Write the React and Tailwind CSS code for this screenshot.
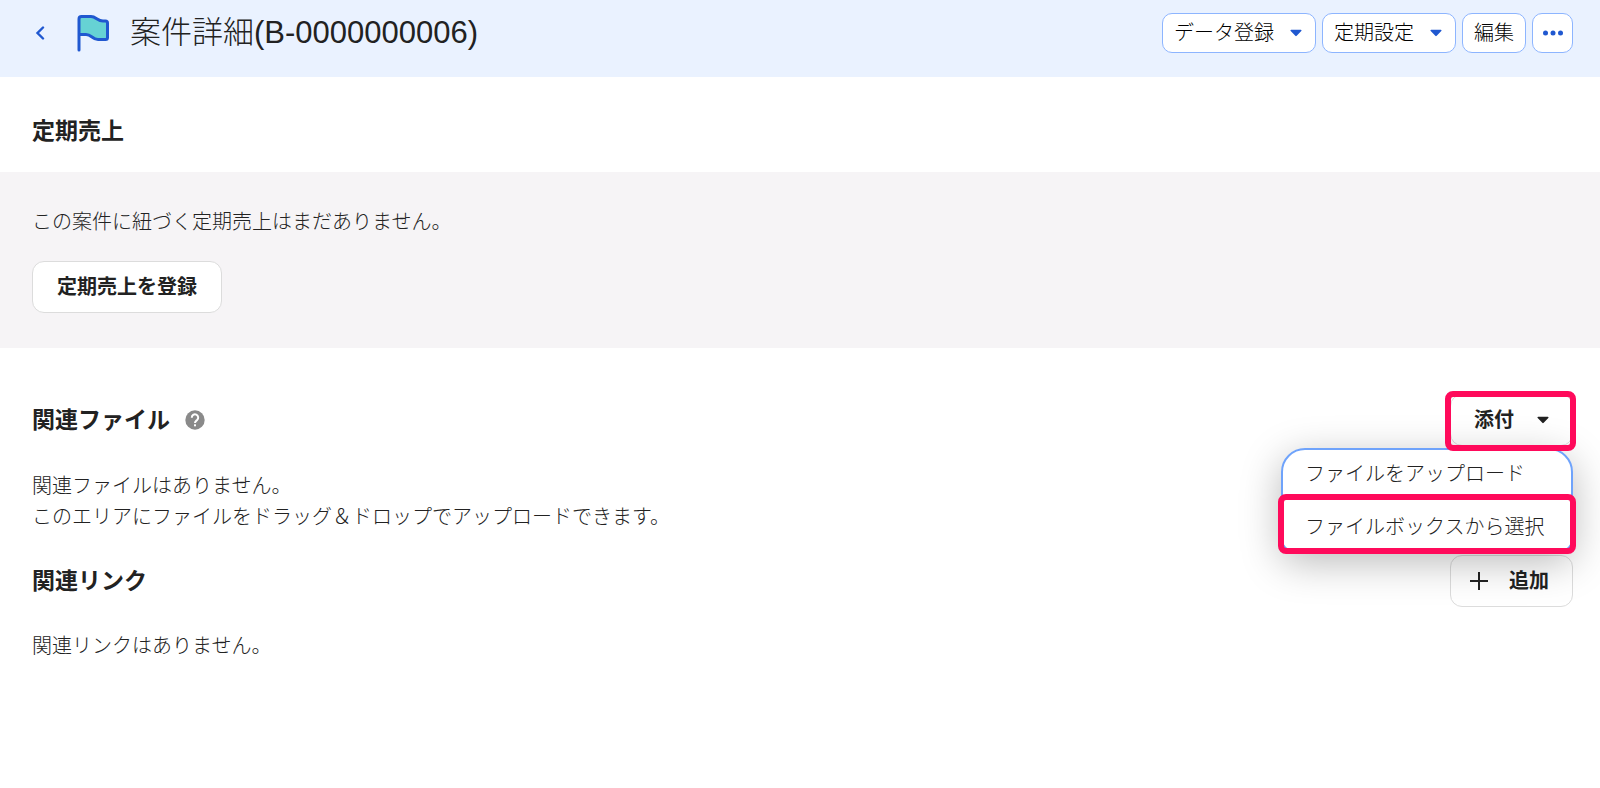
import React, { useState } from "react";

const outlineButton =
  "flex h-10 cursor-pointer items-center rounded-[10px] border border-[#8db5ff] bg-white px-[11px] text-xl leading-none font-light text-black";

const solidButton =
  "flex h-13 cursor-pointer items-center rounded-xl border border-[#dcdcdc] bg-white text-xl leading-none font-bold text-[#222]";

const headingText = "text-[23px] leading-8 font-bold text-[#222]";

const bodyText = "text-xl leading-[31px] font-light";

const Caret = ({ className }) => (
  <svg viewBox="0 0 12 8" className={`h-2 w-3 ${className}`} aria-hidden="true">
    <path d="M1.2 0.8h9.6c.7 0 1 .8.5 1.3L6.7 6.8a1 1 0 0 1-1.4 0L.7 2.1C.2 1.6.5.8 1.2.8z" fill="currentColor" />
  </svg>
);

const FlagIcon = () => (
  <svg viewBox="0 0 34 38" className="h-[38px] w-[34px]" aria-hidden="true">
    <path
      d="M3 20.500V5q0-2.500 2.500-2.500H15c5 0 6.500 4.500 12 4.500h2.500Q31.500 7 31.500 9v14.500q0 2-2 2H22c-5.500 0-6.500-5-12-5H3z"
      fill="#66d2d4"
    />
    <path
      d="M3 36V5q0-2.500 2.500-2.500H15c5 0 6.500 4.500 12 4.500h2.500Q31.500 7 31.500 9v14.500q0 2-2 2H22c-5.500 0-6.500-5-12-5H3"
      fill="none"
      stroke="#2058d0"
      strokeWidth="3"
      strokeLinecap="round"
      strokeLinejoin="round"
    />
  </svg>
);

const HelpIcon = () => (
  <svg viewBox="0 0 20 20" className="size-5" aria-hidden="true">
    <circle cx="10" cy="10" r="9.7" fill="#8a8a8a" />
    <path
      d="M6.800 7.700a3.200 3.200 0 1 1 5.300 2.300c-1.200 1-2.100 1.500-2.100 2.900"
      fill="none"
      stroke="#fff"
      strokeWidth="2"
    />
    <rect x="9" y="14.300" width="2" height="2" fill="#fff" />
  </svg>
);

// Red frame that points the reader at a control
const Highlight = ({ className }) => (
  <span className={`pointer-events-none absolute z-20 rounded-lg border-6 border-[#ff0a5b] ${className}`} />
);

const Header = () => (
  <header className="flex items-start justify-between bg-[#eaf2ff] pt-[13px] pr-[27px] pb-6 pl-8">
    <div className="flex h-10 items-center">
      <button type="button" aria-label="戻る" className="flex w-4 cursor-pointer justify-center">
        <svg viewBox="0 0 10 14" className="h-[14px] w-[10px]" aria-hidden="true">
          <path d="M8 1.500 2.500 7 8 12.500" fill="none" stroke="#2058d0" strokeWidth="2.400" strokeLinecap="round" />
        </svg>
      </button>
      <span className="ml-7">
        <FlagIcon />
      </span>
      <h1 className="ml-5 text-[31px] leading-10 font-light text-[#222]">案件詳細(B-0000000006)</h1>
    </div>
    <div className="flex gap-[6px]">
      <button type="button" className={outlineButton}>
        データ登録
        <Caret className="mr-[2px] ml-4 text-[#2058d0]" />
      </button>
      <button type="button" className={outlineButton}>
        定期設定
        <Caret className="mr-[2px] ml-4 text-[#2058d0]" />
      </button>
      <button type="button" className={outlineButton}>
        編集
      </button>
      <button type="button" aria-label="その他" className={`w-[41px] justify-center ${outlineButton}`}>
        <svg viewBox="0 0 20 6" className="h-[6px] w-5 shrink-0" fill="#2058d0" aria-hidden="true">
          <circle cx="2.500" cy="3" r="2.500" />
          <circle cx="10" cy="3" r="2.500" />
          <circle cx="17.500" cy="3" r="2.500" />
        </svg>
      </button>
    </div>
  </header>
);

const RecurringSales = () => (
  <section>
    <div className="px-8 pt-[38px] pb-[25px]">
      <h2 className={headingText}>定期売上</h2>
    </div>
    <div className="bg-[#f6f4f6] px-8 py-[35px]">
      <p className={bodyText}>この案件に紐づく定期売上はまだありません。</p>
      <button type="button" className={`mt-[23px] px-6 ${solidButton}`}>
        定期売上を登録
      </button>
    </div>
  </section>
);

const AttachMenu = () => {
  const [open, setOpen] = useState(true);

  return (
    <div className="relative">
      <button
        type="button"
        aria-expanded={open}
        onClick={() => setOpen(!open)}
        className={`w-[123px] justify-between px-[23px] ${solidButton}`}
      >
        添付
        <Caret className="text-[#222]" />
      </button>
      {open && (
        <ul className="absolute top-full right-0 z-10 mt-[2px] w-[292px] rounded-t-[24px] rounded-b-xl border-2 border-[#6fa3fb] bg-white text-xl leading-[53px] font-light shadow-[0_10px_40px_rgba(0,0,0,0.28)]">
          <li className="-mt-[2px]">
            <button type="button" className="block w-full cursor-pointer pl-[22px] text-left whitespace-nowrap">
              ファイルをアップロード
            </button>
          </li>
          <li className="relative -mb-1">
            <button type="button" className="block w-full cursor-pointer pl-[22px] text-left whitespace-nowrap">
              ファイルボックスから選択
            </button>
            <Highlight className="-inset-x-[5px] -top-[7px] bottom-0" />
          </li>
        </ul>
      )}
      <Highlight className="-top-[3px] -right-[3px] -bottom-[5px] -left-[5px]" />
    </div>
  );
};

const RelatedFiles = () => (
  <section className="pr-[27px] pl-8">
    <div className="flex items-center justify-between">
      <div className="flex items-center gap-[15px]">
        <h2 className={headingText}>関連ファイル</h2>
        <button type="button" aria-label="ヘルプ" className="cursor-pointer">
          <HelpIcon />
        </button>
      </div>
      <AttachMenu />
    </div>
    <p className={`mt-[25px] ${bodyText}`}>
      関連ファイルはありません。
      <br />
      このエリアにファイルをドラッグ＆ドロップでアップロードできます。
    </p>
  </section>
);

const RelatedLinks = () => (
  <section className="mt-[22px] pr-[27px] pl-8">
    <div className="flex items-center justify-between">
      <h2 className={headingText}>関連リンク</h2>
      <button type="button" className={`w-[123px] justify-between pr-[23px] pl-[19px] ${solidButton}`}>
        <svg viewBox="0 0 18 18" className="size-[18px]" aria-hidden="true">
          <path d="M9 0v18M0 9h18" stroke="#222" strokeWidth="2" />
        </svg>
        追加
      </button>
    </div>
    <p className={`mt-6 ${bodyText}`}>関連リンクはありません。</p>
  </section>
);

const App = () => (
  <div
    lang="ja"
    className="min-h-screen bg-white font-['Liberation_Sans','Noto_Sans_CJK_JP',sans-serif] text-[#222]"
  >
    <Header />
    <main>
      <RecurringSales />
      <div className="pt-[46px] pb-10">
        <RelatedFiles />
        <RelatedLinks />
      </div>
    </main>
  </div>
);

export default App;
